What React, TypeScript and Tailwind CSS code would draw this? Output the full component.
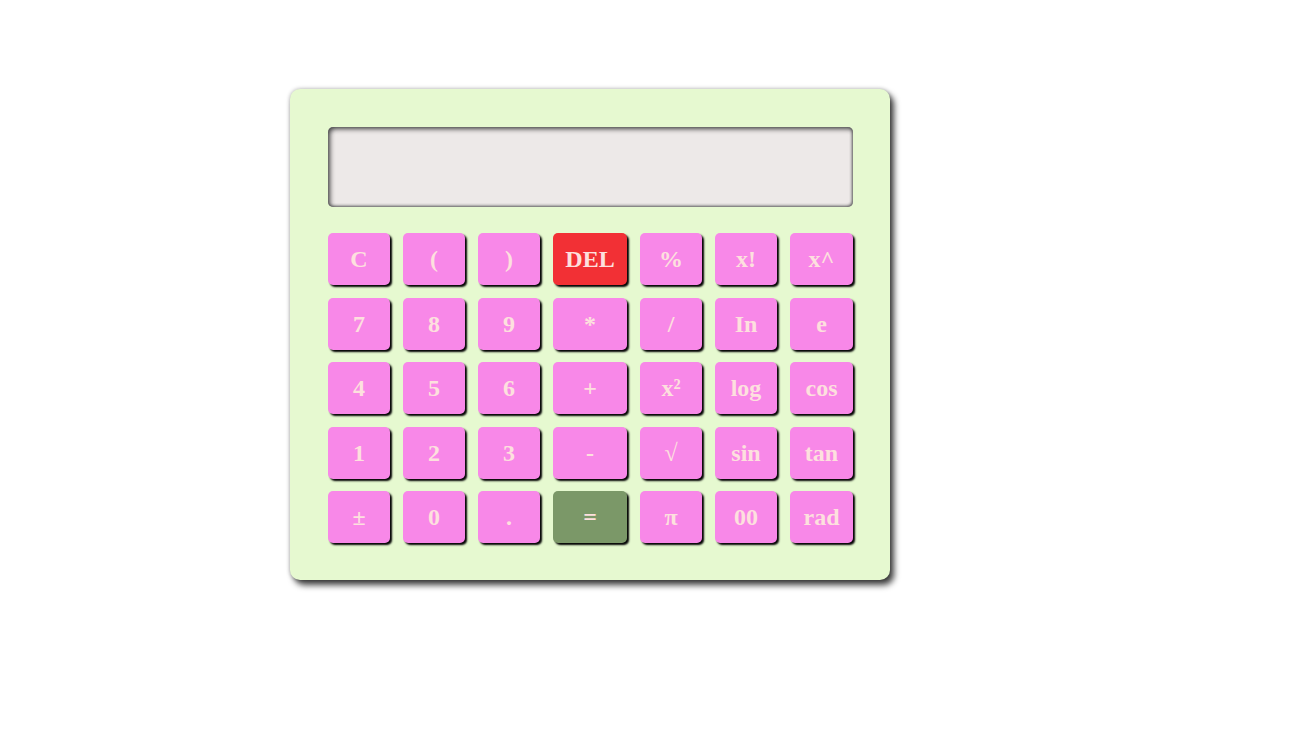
const rows: string[][] = [
  ['C', '(', ')', 'DEL', '%', 'x!', 'x^'],
  ['7', '8', '9', '*', '/', 'In', 'e'],
  ['4', '5', '6', '+', 'x²', 'log', 'cos'],
  ['1', '2', '3', '-', '√', 'sin', 'tan'],
  ['±', '0', '.', '=', 'π', '00', 'rad'],
];

function Key({ label }: { label: string }) {
  let bg = 'bg-[#f888e8]';
  if (label === 'DEL') bg = 'bg-[#f23035]';
  if (label === '=') bg = 'bg-[#7b9868]';
  return (
    <button
      className={`${bg} h-[52px] rounded-[5px] shadow-[2px_2px_2px_#000] text-[#fde0de] text-[24px] font-bold leading-none flex items-center justify-center`}
      style={{ fontFamily: '"Liberation Serif", serif' }}
    >
      {label}
    </button>
  );
}

export default function App() {
  return (
    <div className="min-h-screen bg-white pt-[89px] pl-[290px]">
      <div className="w-[600px] h-[491px] bg-[#e6f9d0] rounded-[10px] shadow-[4px_5px_6px_rgba(0,0,0,0.75),0_0_4px_rgba(0,0,0,0.3)] pt-[38px] pl-[38px]">
        <div className="w-[525px] h-[80px] bg-[#ede9e8] rounded-[5px] shadow-[inset_2px_2px_5px_#444,inset_-1px_-1px_3px_#666]" />
        <div className="mt-[26px] grid grid-cols-[62px_62px_62px_74px_62px_62px_63px] gap-x-[13px] gap-y-[12.5px]">
          {rows.flat().map((k, i) => (
            <Key key={i} label={k} />
          ))}
        </div>
      </div>
    </div>
  );
}
